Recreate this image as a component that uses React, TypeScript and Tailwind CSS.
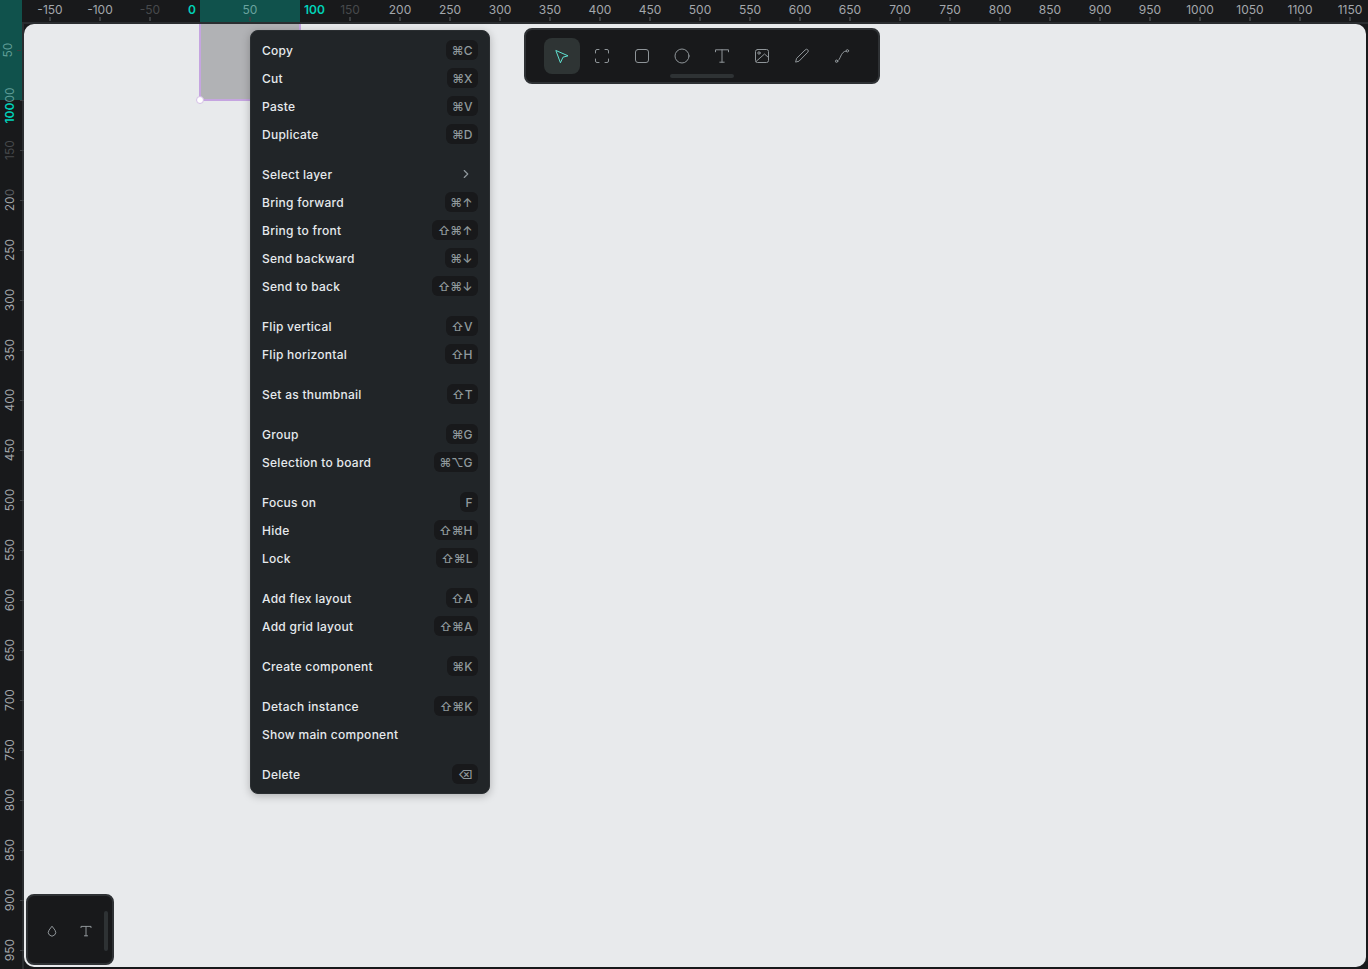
import { ChevronRight } from "lucide-react";

type MenuItem = { label: string; keys?: string; sub?: boolean };

const menuGroups: MenuItem[][] = [
  [
    { label: "Copy", keys: "⌘C" },
    { label: "Cut", keys: "⌘X" },
    { label: "Paste", keys: "⌘V" },
    { label: "Duplicate", keys: "⌘D" },
  ],
  [
    { label: "Select layer", sub: true },
    { label: "Bring forward", keys: "⌘↑" },
    { label: "Bring to front", keys: "⇧⌘↑" },
    { label: "Send backward", keys: "⌘↓" },
    { label: "Send to back", keys: "⇧⌘↓" },
  ],
  [
    { label: "Flip vertical", keys: "⇧V" },
    { label: "Flip horizontal", keys: "⇧H" },
  ],
  [{ label: "Set as thumbnail", keys: "⇧T" }],
  [
    { label: "Group", keys: "⌘G" },
    { label: "Selection to board", keys: "⌘⌥G" },
  ],
  [
    { label: "Focus on", keys: "F" },
    { label: "Hide", keys: "⇧⌘H" },
    { label: "Lock", keys: "⇧⌘L" },
  ],
  [
    { label: "Add flex layout", keys: "⇧A" },
    { label: "Add grid layout", keys: "⇧⌘A" },
  ],
  [{ label: "Create component", keys: "⌘K" }],
  [
    { label: "Detach instance", keys: "⇧⌘K" },
    { label: "Show main component" },
  ],
  [{ label: "Delete", keys: "⌫" }],
];

const topTicks: number[] = [];
for (let v = -150; v <= 1150; v += 50) topTicks.push(v);
const leftTicks: number[] = [];
for (let v = 50; v <= 950; v += 50) leftTicks.push(v);

function topLabelColor(v: number) {
  if (v === -50 || v === 150) return "text-[#47494c]";
  if (v === 50) return "text-[#6aa39e]";
  return "text-[#a3a7ab]";
}

function leftLabelColor(v: number) {
  if (v === 150) return "text-[#47494c]";
  if (v === 50) return "text-[#5f9d97]";
  return "text-[#a3a7ab]";
}

function TopRuler() {
  return (
    <div className="relative flex h-6 shrink-0 border-b-2 border-[#2a2d30] bg-[#18191b] pl-[25px]">
      <div className="absolute left-[200px] top-0 h-[22px] w-[100px] bg-[#10524c]" />
      {topTicks.map((v) => (
        <div key={v} className="relative flex h-[22px] w-[50px] shrink-0 flex-col items-center justify-between pt-[3px] pb-px">
          {v !== 0 && v !== 100 && (
            <>
              <span className={`whitespace-nowrap text-xs leading-[14px] ${topLabelColor(v)}`}>{v}</span>
              <span className="h-1 w-0.5 bg-[#3c3f42]" />
            </>
          )}
        </div>
      ))}
      <span className="absolute left-[188px] top-[3px] text-xs font-semibold leading-[14px] text-[#00d1b8]">0</span>
      <span className="absolute left-[304px] top-[3px] text-xs font-semibold leading-[14px] text-[#00d1b8]">100</span>
    </div>
  );
}

function LeftRuler() {
  return (
    <div className="relative z-10 flex w-6 shrink-0 flex-col border-r-2 border-[#2a2d30] bg-[#18191b] pt-px">
      <div className="absolute left-0 top-[-24px] h-[100px] w-[22px] bg-[#10524c]" />
      {leftTicks.map((v) => (
        <div key={v} className="relative flex h-[50px] w-[22px] shrink-0 items-center justify-between pr-px">
          <span className="flex w-5 justify-center">
            <span className={`-rotate-90 whitespace-nowrap text-xs leading-[14px] ${v === 100 ? "invisible" : leftLabelColor(v)}`}>
              {v === 200 ? (
                <>
                  20<span className="text-[#5c5f62]">0</span>
                </>
              ) : (
                v
              )}
            </span>
          </span>
          <span className="h-px w-1 shrink-0 bg-[#3c3f42]" />
        </div>
      ))}
      <span className="absolute left-[10px] top-[89px] -translate-x-1/2 -translate-y-1/2 -rotate-90 whitespace-nowrap text-xs font-semibold leading-[14px] text-[#00d1b8]">
        100
      </span>
      <span className="absolute left-[10px] top-[64px] -translate-x-1/2 -rotate-90 whitespace-nowrap text-xs leading-[14px] text-[#5f9d97]">00</span>
    </div>
  );
}

function ToolIcon({ children }: { children: React.ReactNode }) {
  return (
    <svg width="16" height="16" viewBox="0 0 16 16" fill="none" stroke="currentColor" strokeWidth="1" strokeLinecap="round" strokeLinejoin="round">
      {children}
    </svg>
  );
}

const tools: React.ReactNode[] = [
  <path key="move" d="M2.2 2.6 14 7.8l-5 1.4L6.6 14.4z" />,
  <path key="board" d="M1.5 5V3a1.5 1.5 0 0 1 1.5-1.5h2M11 1.5h2A1.5 1.5 0 0 1 14.5 3v2M14.5 11v2a1.5 1.5 0 0 1-1.5 1.5h-2M5 14.5H3A1.5 1.5 0 0 1 1.5 13v-2" />,
  <rect key="rect" x="1.5" y="1.5" width="13" height="13" rx="2.5" />,
  <circle key="circle" cx="8" cy="8" r="7" />,
  <path key="text" d="M1.5 3.8V1.8h13v2M8 1.8v12.4M5.8 14.2h4.4" />,
  <g key="image">
    <rect x="1.5" y="1.5" width="13" height="13" rx="2" />
    <circle cx="5" cy="5" r="1.2" />
    <path d="M2 13.5 10.5 6l4 3.5" />
  </g>,
  <path key="pen" d="M11.3 1.8a1.7 1.7 0 0 1 2.5 2.4L5 13.2l-3.4.9.9-3.4z" />,
  <g key="path">
    <path d="M3 13C7 13 6 3 12.5 3" />
    <circle cx="2.6" cy="13.2" r="1.2" />
    <circle cx="13.4" cy="2.8" r="1.2" />
  </g>,
];

function Toolbar() {
  return (
    <div className="absolute left-[500px] top-1 flex h-14 w-[356px] items-start gap-1 rounded-lg border-2 border-[#2e3134] bg-[#18191b] pl-[18px] pt-2">
      {tools.map((icon, i) => (
        <div
          key={i}
          className={`flex h-9 w-9 items-center justify-center rounded-lg ${i === 0 ? "bg-[#2e3434] text-[#5fe0d0]" : "text-[#8f9599]"}`}
        >
          <ToolIcon>{icon}</ToolIcon>
        </div>
      ))}
      <div className="absolute bottom-1 left-[144px] h-1 w-16 rounded-full bg-[#2e3234]" />
    </div>
  );
}

function BottomPanel() {
  return (
    <div className="absolute bottom-0.5 left-0.5 flex h-[71px] w-[88px] items-center rounded-lg border-2 border-[#2e3134] bg-[#18191b] pl-[18px] pt-0.5 text-[#8f9599]">
      <svg width="12" height="12" viewBox="0 0 12 12" fill="none" stroke="currentColor" strokeWidth="1" strokeLinejoin="round">
        <path d="M6 1.2 9 5.2a3.7 3.7 0 1 1-6 0z" />
      </svg>
      <svg className="ml-[22px]" width="12" height="12" viewBox="0 0 12 12" fill="none" stroke="currentColor" strokeWidth="1" strokeLinecap="round">
        <path d="M1 2.6V1.4h10v1.2M6 1.4v9.4M4.4 10.8h3.2" />
      </svg>
      <div className="absolute right-1 top-[15px] h-10 w-1 rounded-full bg-[#2e3234]" />
    </div>
  );
}

function ContextMenu() {
  return (
    <div className="absolute left-[226px] top-1.5 flex w-60 flex-col gap-3 rounded-lg border border-[#2a2e31] bg-[#212528] px-[11px] py-[5px] shadow-[0_2px_8px_rgba(0,0,0,0.25)]">
      {menuGroups.map((group, g) => (
        <div key={g} className="flex flex-col">
          {group.map((item) => (
            <div key={item.label} className="flex h-7 items-center justify-between">
              <span className="pt-0.5 text-xs font-medium tracking-[0.27px] text-[#e6eaed]">{item.label}</span>
              {item.keys && (
                <span className="flex h-5 items-center rounded-md bg-[#18191b] px-[5.5px] pt-px text-xs font-medium leading-none text-[#90999d]">
                  {item.keys}
                </span>
              )}
              {item.sub && <ChevronRight className="mr-[5px] text-[#90999d]" size={14} />}
            </div>
          ))}
        </div>
      ))}
    </div>
  );
}

export default function App() {
  return (
    <div className="flex h-[969px] w-[1368px] flex-col overflow-hidden bg-[#18191b] font-['Inter','DejaVu_Sans',sans-serif]">
      <TopRuler />
      <div className="flex min-h-0 flex-1">
        <LeftRuler />
        <main className="relative mb-0.5 mr-0.5 flex-1 rounded-[10px] bg-[#e8eaec]">
          <div className="absolute left-[175px] top-0 h-[77px] w-[102px] border-x-2 border-b-2 border-[#c5a5e0] bg-[#b1b2b5]" />
          <div className="absolute left-[172px] top-[72px] h-2 w-2 rounded-full border-[1.5px] border-[#d4bfe6] bg-white" />
          <ContextMenu />
          <Toolbar />
          <BottomPanel />
        </main>
      </div>
    </div>
  );
}
